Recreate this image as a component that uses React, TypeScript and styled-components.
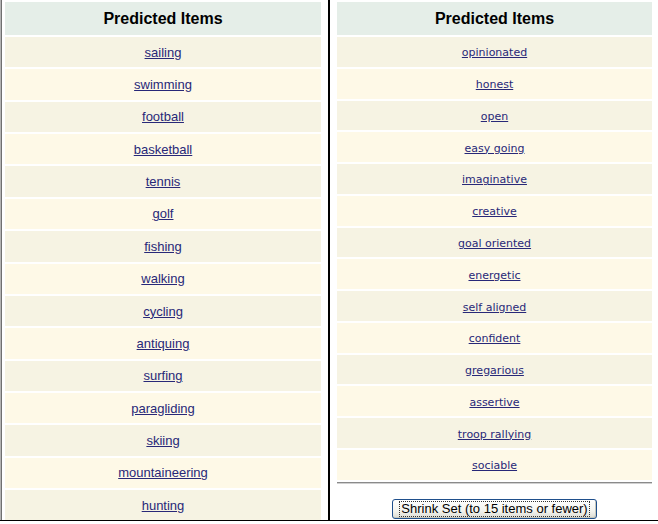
import React from "react";
import styled, { createGlobalStyle } from "styled-components";

const GlobalStyle = createGlobalStyle`
  html, body {
    margin: 0;
    padding: 0;
    background: #ffffff;
  }
  body {
    width: 658px;
    height: 524px;
    overflow: hidden;
  }
`;

const Frameset = styled.div`
  display: flex;
  height: 521px;
  box-sizing: border-box;
  border-bottom: 1px solid #000000;
`;

const LeftFrame = styled.div`
  width: 330px;
  flex: none;
  box-sizing: border-box;
  border-left: 1px solid #b4b4b4;
  box-shadow: inset 1px 0 0 #707070;
  border-right: 2px solid #000000;
  padding: 2px 7px 0 4px;
  overflow: hidden;
`;

const RightFrame = styled.div`
  flex: 1;
  box-sizing: border-box;
  padding: 2px 6px 0 7px;
  display: flex;
  flex-direction: column;
  overflow: hidden;
`;

const Table = styled.div`
  display: flex;
  flex-direction: column;
  gap: 2px;
`;

const HeadCell = styled.div`
  height: 33px;
  flex: none;
  background: #e5eee8;
  display: flex;
  align-items: center;
  justify-content: center;
  font-family: "Liberation Sans", Arial, sans-serif;
  font-weight: bold;
  font-size: 16px;
  color: #000000;
`;

const Cell = styled.div<{ $odd: boolean; $h: number; $dy: number }>`
  height: ${(p) => p.$h}px;
  flex: none;
  box-sizing: border-box;
  padding-top: ${(p) => p.$dy}px;
  background: ${(p) => (p.$odd ? "#f6f3e3" : "#fef9e7")};
  display: flex;
  align-items: center;
  justify-content: center;
`;

const Link = styled.a<{ $font: string; $size: number }>`
  font-family: ${(p) => p.$font};
  font-size: ${(p) => p.$size}px;
  color: #282878;
  text-decoration: underline;
  cursor: pointer;
`;

const Rule = styled.div`
  margin-top: 2px;
  height: 1px;
  border-top: 1px solid #8a8a8a;
  background: #d0d0d0;
`;

const ButtonRow = styled.div`
  display: flex;
  justify-content: center;
  padding-top: 15px;
`;

const ShrinkButton = styled.button`
  width: 205px;
  height: 20px;
  box-sizing: border-box;
  padding: 0 3px;
  border: 1px solid #1f4f8c;
  border-radius: 3px;
  background: linear-gradient(#ffffff 0%, #f4f4ef 60%, #dcdcd3 100%);
  box-shadow: inset -1px -1px 0 #c8c8bc;
  display: flex;
  align-items: center;
  justify-content: center;
  cursor: pointer;
`;

const ButtonLabel = styled.span`
  font-family: "Liberation Sans", Arial, sans-serif;
  font-size: 13px;
  color: #000000;
  line-height: 14px;
  padding: 0 1px;
  border: 1px dotted #333333;
`;

const sports = [
  "sailing",
  "swimming",
  "football",
  "basketball",
  "tennis",
  "golf",
  "fishing",
  "walking",
  "cycling",
  "antiquing",
  "surfing",
  "paragliding",
  "skiing",
  "mountaineering",
  "hunting",
];

const traits = [
  "opinionated",
  "honest",
  "open",
  "easy going",
  "imaginative",
  "creative",
  "goal oriented",
  "energetic",
  "self aligned",
  "confident",
  "gregarious",
  "assertive",
  "troop rallying",
  "sociable",
];

const LEFT_FONT = `"Liberation Sans", Arial, sans-serif`;
const RIGHT_FONT = `"DejaVu Sans", Verdana, sans-serif`;

export default function App() {
  return (
    <>
      <GlobalStyle />
      <Frameset>
        <LeftFrame>
          <Table>
            <HeadCell>Predicted Items</HeadCell>
            {sports.map((s, i) => (
              <Cell key={s} $odd={i % 2 === 0} $h={30.36} $dy={0}>
                <Link $font={LEFT_FONT} $size={13}>
                  {s}
                </Link>
              </Cell>
            ))}
          </Table>
        </LeftFrame>
        <RightFrame>
          <Table>
            <HeadCell>Predicted Items</HeadCell>
            {traits.map((t, i) => (
              <Cell key={t} $odd={i % 2 === 0} $h={29.77} $dy={2}>
                <Link $font={RIGHT_FONT} $size={11}>
                  {t}
                </Link>
              </Cell>
            ))}
          </Table>
          <Rule />
          <ButtonRow>
            <ShrinkButton type="button">
              <ButtonLabel>Shrink Set (to 15 items or fewer)</ButtonLabel>
            </ShrinkButton>
          </ButtonRow>
        </RightFrame>
      </Frameset>
    </>
  );
}
